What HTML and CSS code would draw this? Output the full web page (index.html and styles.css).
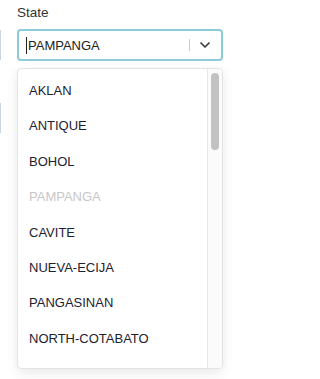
FILE: index.html
```html
<!DOCTYPE html>
<html>
<head>
<meta charset="utf-8">
<link rel="stylesheet" href="styles.css">
</head>
<body>
<div class="page">
  <div class="edge">
    <div class="peek peek-top"></div>
    <div class="peek peek-bottom"></div>
  </div>
  <div class="field">
    <div class="label">State</div>
    <div class="control">
      <span class="caret"></span>
      <span class="value">PAMPANGA</span>
      <span class="sep"></span>
      <svg class="chev" width="10" height="6" viewBox="0 0 10 6"><path d="M1 1 L5 5 L9 1" fill="none" stroke="#3d3d3d" stroke-width="1.7" stroke-linecap="round" stroke-linejoin="round"/></svg>
    </div>
    <div class="menu">
      <ul class="list">
        <li class="item">AKLAN</li>
        <li class="item">ANTIQUE</li>
        <li class="item">BOHOL</li>
        <li class="item disabled">PAMPANGA</li>
        <li class="item">CAVITE</li>
        <li class="item">NUEVA-ECIJA</li>
        <li class="item">PANGASINAN</li>
        <li class="item">NORTH-COTABATO</li>
      </ul>
      <div class="track"><div class="thumb"></div></div>
    </div>
  </div>
</div>
</body>
</html>
```

FILE: styles.css
```css
html, body {
  margin: 0;
  padding: 0;
  background: #ffffff;
  font-family: "Liberation Sans", Arial, sans-serif;
}
.page {
  display: flex;
  width: 241px;
  height: 379px;
  overflow: hidden;
}
.edge {
  width: 2px;
  display: flex;
  flex-direction: column;
}
.peek {
  width: 1px;
  height: 30px;
  background: #c9d6e3;
}
.peek-top { margin-top: 30px; }
.peek-bottom { margin-top: 43px; }
.field {
  position: relative;
  margin-left: 15px;
  width: 206px;
}
.label {
  font-size: 13.5px;
  color: #333333;
  line-height: 16px;
  margin-top: 5px;
  height: 16px;
}
.control {
  margin-top: 8px;
  height: 28px;
  border: 2px solid #8ccbd9;
  border-radius: 4px;
  display: flex;
  align-items: center;
  padding-left: 7px;
  padding-right: 11px;
}
.caret {
  width: 1px;
  height: 17px;
  background: #222;
}
.value {
  font-size: 13px;
  color: #222222;
  flex: 1;
  margin-left: 1px;
}
.sep {
  width: 1px;
  height: 12px;
  background: #cccccc;
  margin-right: 10px;
}
.chev { display: block; }
.menu {
  position: absolute;
  left: 0;
  top: 68px;
  width: 204px;
  height: 299px;
  border: 1px solid #e3e3e3;
  border-radius: 4px;
  box-shadow: 0 4px 12px rgba(0, 0, 0, 0.09);
  background: #fff;
  display: flex;
  overflow: hidden;
}
.list {
  list-style: none;
  margin: 0;
  padding: 4px 0 0 0;
  flex: 1;
}
.item {
  height: 35.4px;
  line-height: 35.4px;
  padding-left: 11px;
  font-size: 13px;
  color: #1d2130;
}
.item.disabled { color: #c7c7c7; }
.track {
  width: 14px;
  border-left: 1px solid #e6e6e6;
  background: #fbfbfb;
  display: flex;
  justify-content: center;
}
.thumb {
  width: 8px;
  height: 77px;
  margin-top: 4px;
  border-radius: 4px;
  background: #c2c2c2;
}
```
